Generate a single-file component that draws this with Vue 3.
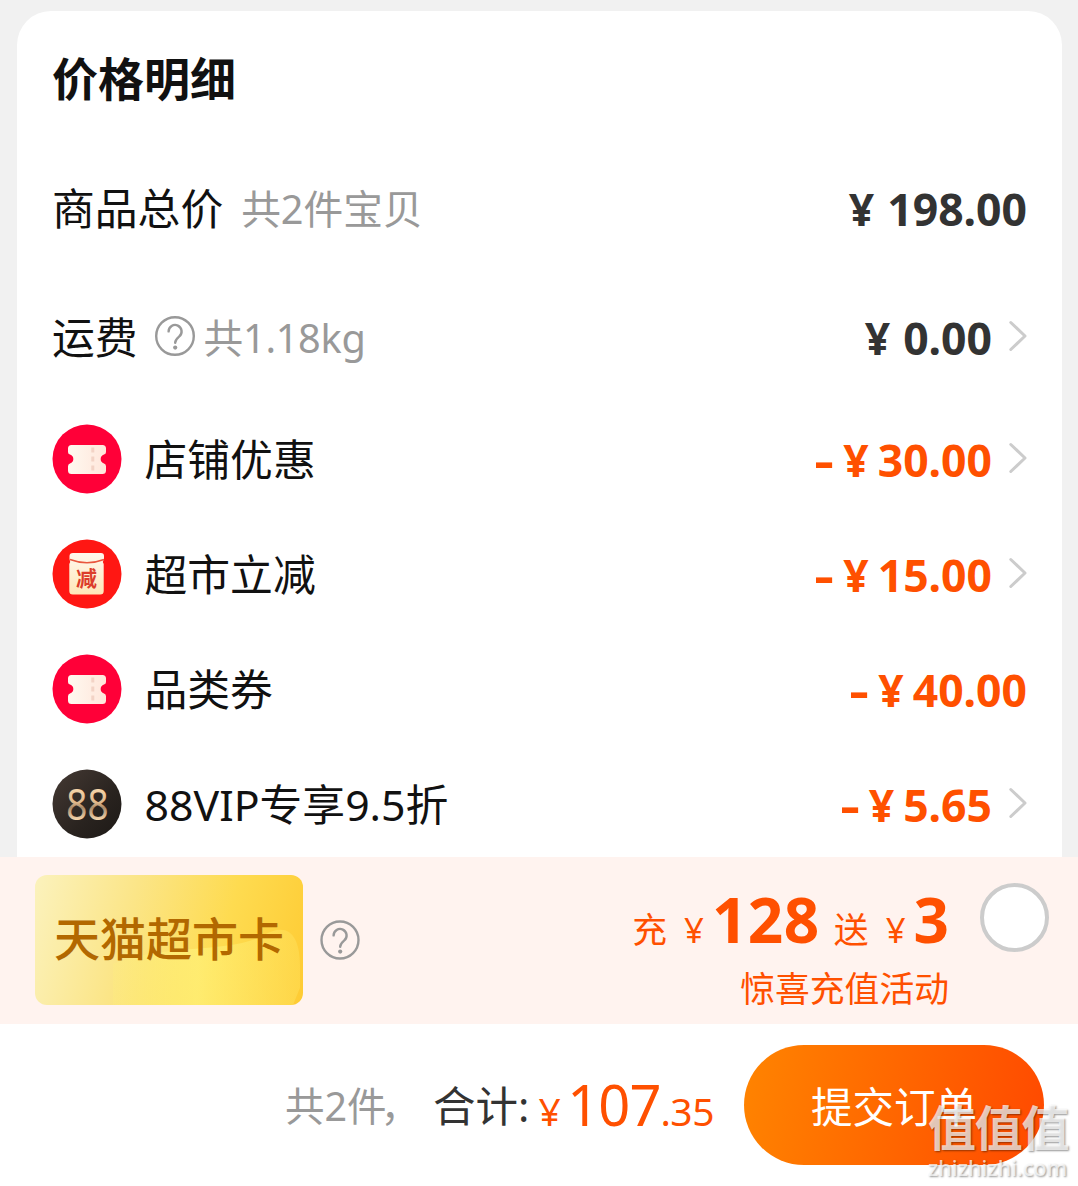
<script setup>
const discounts = [
  { icon: 'ticket', label: '店铺优惠', value: '30.00', arrow: true },
  { icon: 'bag', label: '超市立减', value: '15.00', arrow: true },
  { icon: 'ticket', label: '品类券', value: '40.00', arrow: false },
  { icon: 'vip', label: '88VIP专享9.5折', value: '5.65', arrow: true },
]
</script>

<template>
  <div class="page">
    <main class="scroll">
      <section class="card">
        <h1 class="title">价格明细</h1>
        <div class="row total">
          <span class="label">商品总价</span>
          <span class="note count">共2件宝贝</span>
          <span class="price dark"><span class="yen">¥</span>198.00</span>
        </div>
        <div class="row freight">
          <span class="label">运费</span>
          <svg class="help" viewBox="0 0 40 40">
            <circle cx="20" cy="20" r="18.8" />
            <path d="M13.6 15.4a6.5 6.5 0 1 1 10.7 5c-2.5 2.1-4.1 3.2-4.1 6.3" />
            <circle class="dot" cx="20.2" cy="31.6" r="2.1" />
          </svg>
          <span class="note weight">共1.18kg</span>
          <span class="price dark"><span class="yen">¥</span>0.00</span>
          <svg class="arrow" viewBox="0 0 18 32"><path d="M1.8 2.5 16 16 1.8 29.5" /></svg>
        </div>
        <div v-for="item in discounts" :key="item.label" class="row discount">
          <svg v-if="item.icon === 'ticket'" class="badge" viewBox="0 0 70 70">
            <defs>
              <linearGradient id="ticketFill" x1="0" x2="1">
                <stop offset="0" stop-color="#fff9f0" />
                <stop offset="1" stop-color="#ffe6db" />
              </linearGradient>
            </defs>
            <circle cx="35" cy="35" r="34.5" fill="#ff0038" />
            <path fill="url(#ticketFill)" d="M19.5 21H50.5q3.5 0 3.5 3.5V28q0 2-2 2.600a4.700 4.700 0 0 0 0 9q2 .6 2 2.600V46.500q0 3.500-3.500 3.500H19.500q-3.500 0-3.500-3.500V42.200q0-2 2-2.600a4.700 4.700 0 0 0 0-9q-2-.6-2-2.600V24.500q0-3.500 3.500-3.500Z" />
            <path d="M40.8 23.5v25" stroke="#f3d3c6" stroke-width="3" stroke-dasharray="5 4" />
          </svg>
          <svg v-else-if="item.icon === 'bag'" class="badge" viewBox="0 0 70 70">
            <defs>
              <linearGradient id="bagFill" x2="0" y2="1">
                <stop offset="0" stop-color="#fff8ee" />
                <stop offset="1" stop-color="#ffe7b8" />
              </linearGradient>
            </defs>
            <circle cx="35" cy="35" r="34.5" fill="#ff1713" />
            <path fill="url(#bagFill)" d="M21 14H49q3 0 3 3V20l-1.200 3 .9 2V52q0 3.500-3.500 3.500H20.800q-3.500 0-3.500-3.500V25l.9-2L17.500 20V17q0-3 3.500-3Z" />
            <path d="M18 20.5Q35 27 52 20.5" fill="none" stroke="#e9573e" stroke-width="1.5" />
            <text x="34.5" y="46.5" text-anchor="middle" class="bag-text">减</text>
          </svg>
          <svg v-else class="badge" viewBox="0 0 70 70">
            <defs>
              <linearGradient id="vipBg" x2="1" y2="1">
                <stop offset="0" stop-color="#453a34" />
                <stop offset=".6" stop-color="#29231f" />
                <stop offset="1" stop-color="#1d1916" />
              </linearGradient>
              <linearGradient id="vipGold" x2="0" y2="1">
                <stop offset=".25" stop-color="#f7d7ac" />
                <stop offset=".5" stop-color="#dfb78b" />
                <stop offset=".58" stop-color="#a98969" />
                <stop offset=".8" stop-color="#f9d9b0" />
              </linearGradient>
            </defs>
            <circle cx="35" cy="35" r="34.5" fill="url(#vipBg)" />
            <text transform="translate(35.5 50.5) scale(.84 1)" text-anchor="middle" fill="url(#vipGold)" class="vip-text">88</text>
          </svg>
          <span class="label">{{ item.label }}</span>
          <span class="price orange"><span class="minus">-</span><span class="yen">¥</span>{{ item.value }}</span>
          <svg v-if="item.arrow" class="arrow" viewBox="0 0 18 32"><path d="M1.8 2.5 16 16 1.8 29.5" /></svg>
        </div>
      </section>
    </main>

    <section class="promo">
      <div class="gold">
        <svg class="shine" viewBox="0 0 268 129" preserveAspectRatio="none">
          <defs>
            <linearGradient id="shineFill" x1="0" x2="1">
              <stop offset="0" stop-color="#fff27a" stop-opacity=".2" />
              <stop offset=".45" stop-color="#fff27a" stop-opacity=".7" />
              <stop offset="1" stop-color="#ffe05a" stop-opacity=".5" />
            </linearGradient>
          </defs>
          <path fill="url(#shineFill)" d="M78 129V88C130 68 195 78 228 60C252 46 265 58 265 90V112L258 129Z" />
        </svg>
        <span class="gold-text">天猫超市卡</span>
      </div>
      <svg class="help promo-help" viewBox="0 0 40 40">
        <circle cx="20" cy="20" r="18.5" />
        <path d="M13.6 15.4a6.5 6.5 0 1 1 10.7 5c-2.5 2.1-4.1 3.2-4.1 6.3" />
        <circle class="dot" cx="20.2" cy="31.6" r="2.1" />
      </svg>
      <div class="offer">
        <div class="offer-main">
          <span>充</span><span class="offer-yen">¥</span><b class="n128">128</b><span class="give">送</span><span class="offer-yen">¥</span><b>3</b>
        </div>
        <div class="offer-sub">惊喜充值活动</div>
      </div>
      <span class="radio"></span>
    </section>

    <footer class="footer">
      <span class="items">共2件<span class="comma">，</span></span>
      <span class="sum">合计:</span>
      <span class="pay"><span class="pay-yen">¥</span><span class="int">107</span><span class="dec">.35</span></span>
      <button class="submit">提交订单</button>
    </footer>

    <div class="watermark">
      <div class="wm-name">值值值</div>
      <div class="wm-url">zhizhizhi.com</div>
    </div>
  </div>
</template>

<style>
body { margin: 0; }
</style>

<style scoped>
.page {
  position: relative;
  width: 1078px;
  height: 1186px;
  overflow: hidden;
  display: flex;
  flex-direction: column;
  background: #fff;
  font-family: "Noto Sans", "Noto Sans CJK SC", sans-serif;
  white-space: nowrap;
}
.scroll {
  height: 857px;
  box-sizing: border-box;
  padding: 11px 16px 0 17px;
  background: #f1f1f1;
  overflow: hidden;
}
.card {
  height: 900px;
  box-sizing: border-box;
  padding: 0 35px;
  border-radius: 34px;
  background: #fff;
}
.title {
  margin: 0;
  height: 133px;
  line-height: 134px;
  font-size: 46px;
  font-weight: 700;
  color: #111;
}
.row { display: flex; align-items: center; }
.total { height: 130px; }
.freight { height: 128px; }
.discount { height: 115px; }
.label {
  font-size: 42.8px;
  line-height: 60px;
  padding-bottom: 1px;
  color: #111;
}
.discount .label { padding: 1px 0 0; }
.note {
  font-size: 39.7px;
  line-height: 60px;
  padding-bottom: 1px;
  color: #999;
}
.count { margin-left: 18px; }
.weight { margin-left: 9px; letter-spacing: -.3px; }
.help {
  width: 40px;
  height: 40px;
  margin-left: 17px;
  fill: none;
  stroke: #999;
  stroke-width: 2.4;
  stroke-linecap: round;
}
.help .dot { fill: #999; stroke: none; }
.freight .help { margin: -5px 0 0 17px; }
.badge { width: 70px; height: 70px; margin: -2px 23px 0 -.5px; }
.bag-text { font: 700 21px "Noto Sans CJK SC", sans-serif; fill: #dc3d2b; }
.vip-text { font: 400 44px "Noto Sans", sans-serif; }
.price {
  margin-left: auto;
  font-size: 44.5px;
  line-height: 60px;
  font-weight: 700;
}
.dark { color: #333; }
.dark .yen { margin-right: 13px; }
.orange { color: #ff5000; padding-top: 1px; }
.orange .yen { margin-right: 9px; }
.minus { display: inline-block; transform: scaleX(1.38); margin-right: 11.5px; }
.arrow {
  width: 18px;
  height: 32px;
  margin: -4px 0 0 17px;
  fill: none;
  stroke: #ccc;
  stroke-width: 3;
  stroke-linecap: round;
  stroke-linejoin: round;
}
.promo {
  height: 167px;
  box-sizing: border-box;
  padding: 0 29px 1px 35px;
  display: flex;
  align-items: center;
  background: #fff3ef;
}
.gold {
  position: relative;
  width: 268px;
  height: 130px;
  display: flex;
  align-items: center;
  justify-content: center;
  border-radius: 12px;
  overflow: hidden;
  background: linear-gradient(105deg, #fbf2bd 0%, #fbe587 35%, #fedb50 68%, #fecb33 100%);
}
.shine { position: absolute; inset: 0; width: 100%; height: 100%; }
.gold-text {
  position: relative;
  padding-bottom: 9px;
  font-family: "Noto Sans CJK SC", sans-serif;
  font-size: 46px;
  font-weight: 500;
  line-height: 60px;
  color: #b26800;
}
.offer {
  margin-left: auto;
  display: flex;
  flex-direction: column;
  align-items: flex-end;
  color: #ff5000;
  font-size: 34.8px;
}
.offer-main { display: flex; align-items: baseline; margin-top: 17px; line-height: 76px; }
.offer-main b { font-size: 62px; }
.offer-main .n128 { letter-spacing: .5px; }
.offer-yen { margin-left: 17px; margin-right: 8px; }
.n128 + .give { margin-left: 14px; }
.offer-sub { margin-top: -7px; line-height: 56px; }
.radio {
  width: 69px;
  height: 69px;
  box-sizing: border-box;
  margin: -45px 0 0 31px;
  border: 4px solid #ccc;
  border-radius: 50%;
  background: #fff;
}
.footer {
  height: 162px;
  box-sizing: border-box;
  padding: 0 34px 0 0;
  display: flex;
  align-items: center;
  justify-content: flex-end;
  color: #333;
}
.items { font-size: 39.5px; color: #999; padding-bottom: 2px; }
.comma { margin: 0 6px 0 -6px; }
.sum { margin-left: 7px; font-size: 42.5px; padding-bottom: 3px; }
.pay { margin-left: 9px; color: #ff5000; display: flex; align-items: baseline; padding-bottom: 3px; }
.pay-yen { font-size: 39px; margin-right: 6.5px; }
.int { font-size: 56px; letter-spacing: -1px; }
.dec { font-size: 39px; letter-spacing: -.5px; }
.submit {
  width: 300px;
  height: 120px;
  margin-left: 30px;
  padding: 0;
  border: 0;
  border-radius: 60px;
  background: linear-gradient(100deg, #ff8400, #ff4c00 95%);
  color: #fff;
  font: 400 41.5px/120px "Noto Sans CJK SC", sans-serif;
}
.watermark {
  position: absolute;
  left: 928px;
  top: 1100px;
  color: rgba(255, 255, 255, .72);
  text-shadow: 1px 1px 2px rgba(0, 0, 0, .42);
}
.wm-name { font-size: 48px; font-weight: 700; line-height: 56px; letter-spacing: -1.2px; }
.wm-url { font-size: 21.6px; line-height: 24px; font-weight: 500; }
</style>
